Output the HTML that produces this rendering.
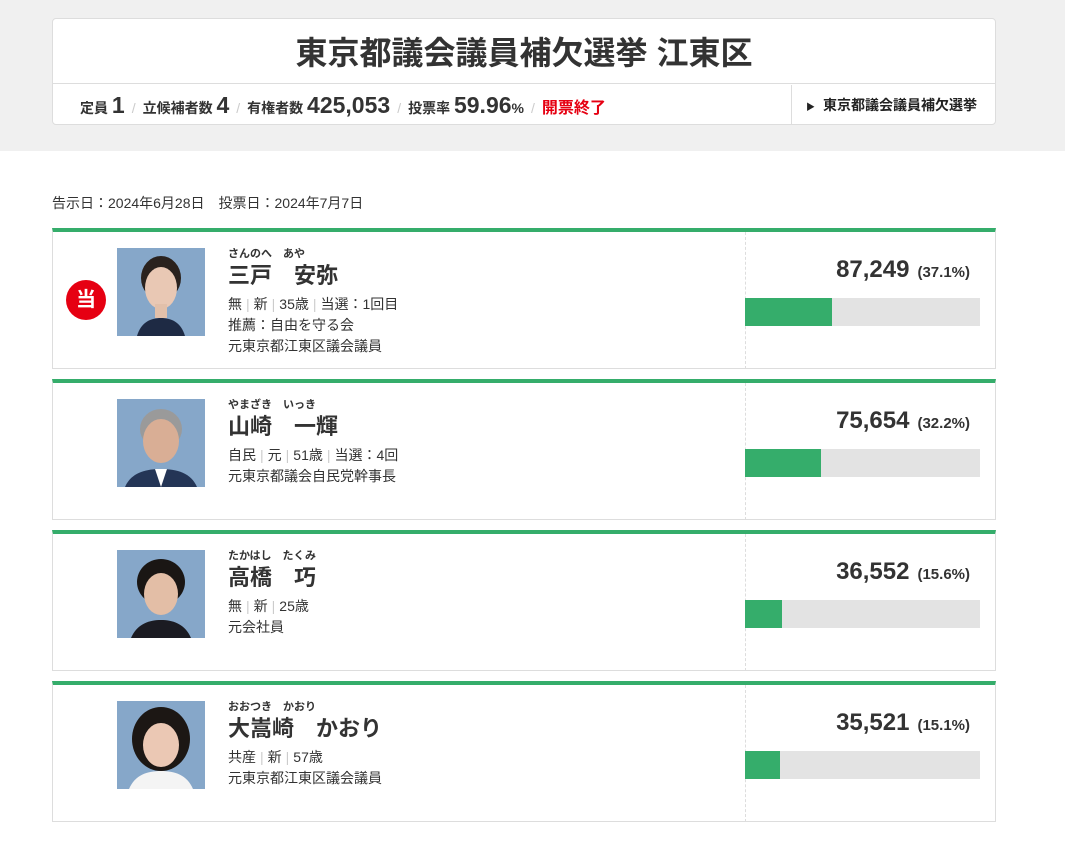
<!DOCTYPE html>
<html><head><meta charset="utf-8"><style>
*{margin:0;padding:0;box-sizing:border-box}
body{width:1065px;height:852px;background:#fff;font-family:"Liberation Sans","Noto Sans CJK JP",sans-serif;color:#333;position:relative;overflow:hidden}
.band{position:absolute;left:0;top:0;width:1065px;height:151px;background:#f0f0f0}
.hd{position:absolute;left:52px;top:18px;width:944px;height:107px;background:#fff;border:1px solid #ddd;border-radius:4px}
.ttl{height:65px;border-bottom:1px solid #ddd;text-align:center;font-size:32px;font-weight:bold;line-height:68px;color:#333}
.st{position:absolute;left:0;top:66px;height:40px;width:738px;font-size:14px;font-weight:bold;line-height:40px;padding-left:27px;white-space:nowrap}
.st b{font-size:23px}
.st .sl{color:#ccc;font-weight:normal;margin:0 7px}
.lk{position:absolute;left:738px;top:66px;width:205px;height:40px;border-left:1px solid #ddd;font-size:14px;font-weight:bold;line-height:40px;padding-left:14px;color:#222}
.date{position:absolute;left:52px;top:193px;font-size:14px;color:#333}
.card{position:absolute;left:52px;width:944px;height:141px;border:1px solid #ddd;border-top:4px solid #35ad6b}
.ph{position:absolute;left:64px;top:16px;width:88px;height:88px}
.tx{position:absolute;left:175px;top:14px;font-size:14px;line-height:21px}
.fu{font-size:11px;font-weight:bold;line-height:16px}
.nm{font-size:22px;font-weight:bold;line-height:28px;margin-bottom:4px}
.tx .p{color:#ccc;margin:0 4px}
.rt{position:absolute;left:692px;top:0;width:250px;height:137px;border-left:1px dashed #ddd}
.num{position:absolute;right:25px;top:24px;font-size:24px;font-weight:bold;white-space:nowrap}
.num span{font-size:15px;margin-left:8px}
.bar{position:absolute;left:-1px;top:66px;width:235px;height:28px;background:#e3e3e3}
.bar i{display:block;height:28px;background:#35ad6b}
.win{position:absolute;left:13px;top:48px;width:40px;height:40px;border-radius:50%;background:#e60012;color:#fff;font-size:20px;font-weight:bold;text-align:center;line-height:40px}
</style></head><body>
<div class="band"></div>
<div class="hd">
<div class="ttl">東京都議会議員補欠選挙 江東区</div>
<div class="st">定員 <b>1</b><span class="sl">/</span>立候補者数 <b>4</b><span class="sl">/</span>有権者数 <b>425,053</b><span class="sl">/</span>投票率 <b>59.96</b>%<span class="sl">/</span><span style="color:#e60012;font-size:16px">開票終了</span></div>
<div class="lk"><span style="font-size:9px;margin-right:8px">▶</span>東京都議会議員補欠選挙</div>
</div>
<div class="date">告示日：2024年6月28日　投票日：2024年7月7日</div>

<div class="card" style="top:228px">
<div class="win">当</div>
<svg class="ph" viewBox="0 0 88 88"><rect width="88" height="88" fill="#86a7c9"/><path d="M20 88c4-14 14-18 24-18s20 4 24 18z" fill="#1e2a44"/><ellipse cx="44" cy="30" rx="20" ry="22" fill="#2a221e"/><ellipse cx="44" cy="40" rx="16" ry="21" fill="#e9c8b4"/><rect x="38" y="56" width="12" height="14" fill="#e2c0aa"/></svg>
<div class="tx"><div class="fu">さんのへ　あや</div><div class="nm">三戸　安弥</div>無<span class="p">|</span>新<span class="p">|</span>35歳<span class="p">|</span>当選：1回目<br>推薦：自由を守る会<br>元東京都江東区議会議員</div>
<div class="rt"><div class="num">87,249<span>(37.1%)</span></div><div class="bar"><i style="width:87px"></i></div></div>
</div>

<div class="card" style="top:379px">
<svg class="ph" viewBox="0 0 88 88"><rect width="88" height="88" fill="#86a7c9"/><path d="M8 88c6-14 20-18 36-18s30 4 36 18z" fill="#243556"/><ellipse cx="44" cy="30" rx="21" ry="20" fill="#9a9a9a"/><ellipse cx="44" cy="42" rx="18" ry="22" fill="#d9ae95"/><path d="M38 70l6 18 6-18z" fill="#fff"/></svg>
<div class="tx"><div class="fu">やまざき　いっき</div><div class="nm">山崎　一輝</div>自民<span class="p">|</span>元<span class="p">|</span>51歳<span class="p">|</span>当選：4回<br>元東京都議会自民党幹事長</div>
<div class="rt"><div class="num">75,654<span>(32.2%)</span></div><div class="bar"><i style="width:76px"></i></div></div>
</div>

<div class="card" style="top:530px">
<svg class="ph" viewBox="0 0 88 88"><rect width="88" height="88" fill="#86a7c9"/><path d="M14 88c6-14 18-18 30-18s24 4 30 18z" fill="#1b1b22"/><ellipse cx="44" cy="32" rx="24" ry="23" fill="#1a1614"/><ellipse cx="44" cy="44" rx="17" ry="21" fill="#e3bea6"/></svg>
<div class="tx"><div class="fu">たかはし　たくみ</div><div class="nm">高橋　巧</div>無<span class="p">|</span>新<span class="p">|</span>25歳<br>元会社員</div>
<div class="rt"><div class="num">36,552<span>(15.6%)</span></div><div class="bar"><i style="width:37px"></i></div></div>
</div>

<div class="card" style="top:681px">
<svg class="ph" viewBox="0 0 88 88"><rect width="88" height="88" fill="#86a7c9"/><path d="M12 88c6-14 18-18 32-18s26 4 32 18z" fill="#f4f4f4"/><ellipse cx="44" cy="38" rx="29" ry="32" fill="#1c1714"/><ellipse cx="44" cy="44" rx="18" ry="22" fill="#ebc8b4"/></svg>
<div class="tx"><div class="fu">おおつき　かおり</div><div class="nm">大嵩崎　かおり</div>共産<span class="p">|</span>新<span class="p">|</span>57歳<br>元東京都江東区議会議員</div>
<div class="rt"><div class="num">35,521<span>(15.1%)</span></div><div class="bar"><i style="width:35px"></i></div></div>
</div>
</body></html>
